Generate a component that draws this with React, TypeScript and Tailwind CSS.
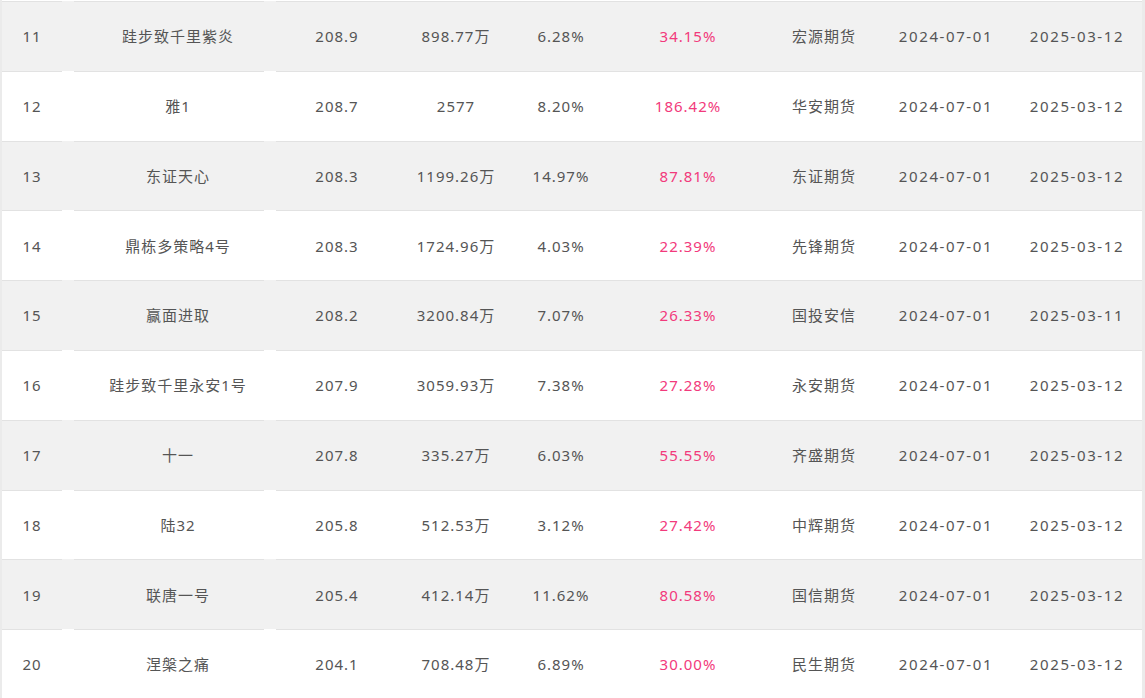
import React from 'react';

type Row = {
  rank: number;
  name: string;
  value: string;
  size: string;
  drawdown: string;
  ret: string;
  company: string;
  start: string;
  end: string;
};

const rows: Row[] = [
  { rank: 11, name: '跬步致千里紫炎', value: '208.9', size: '898.77万', drawdown: '6.28%', ret: '34.15%', company: '宏源期货', start: '2024-07-01', end: '2025-03-12' },
  { rank: 12, name: '雅1', value: '208.7', size: '2577', drawdown: '8.20%', ret: '186.42%', company: '华安期货', start: '2024-07-01', end: '2025-03-12' },
  { rank: 13, name: '东证天心', value: '208.3', size: '1199.26万', drawdown: '14.97%', ret: '87.81%', company: '东证期货', start: '2024-07-01', end: '2025-03-12' },
  { rank: 14, name: '鼎栋多策略4号', value: '208.3', size: '1724.96万', drawdown: '4.03%', ret: '22.39%', company: '先锋期货', start: '2024-07-01', end: '2025-03-12' },
  { rank: 15, name: '赢面进取', value: '208.2', size: '3200.84万', drawdown: '7.07%', ret: '26.33%', company: '国投安信', start: '2024-07-01', end: '2025-03-11' },
  { rank: 16, name: '跬步致千里永安1号', value: '207.9', size: '3059.93万', drawdown: '7.38%', ret: '27.28%', company: '永安期货', start: '2024-07-01', end: '2025-03-12' },
  { rank: 17, name: '十一', value: '207.8', size: '335.27万', drawdown: '6.03%', ret: '55.55%', company: '齐盛期货', start: '2024-07-01', end: '2025-03-12' },
  { rank: 18, name: '陆32', value: '205.8', size: '512.53万', drawdown: '3.12%', ret: '27.42%', company: '中辉期货', start: '2024-07-01', end: '2025-03-12' },
  { rank: 19, name: '联唐一号', value: '205.4', size: '412.14万', drawdown: '11.62%', ret: '80.58%', company: '国信期货', start: '2024-07-01', end: '2025-03-12' },
  { rank: 20, name: '涅槃之痛', value: '204.1', size: '708.48万', drawdown: '6.89%', ret: '30.00%', company: '民生期货', start: '2024-07-01', end: '2025-03-12' },
];

const cell = 'flex items-center justify-center border-t border-[#e2e2e2] whitespace-nowrap';

export default function App() {
  return (
    <div
      className="w-full h-[698px] overflow-hidden bg-white border-l-2 border-r-[3px] border-[#ebebeb] pt-px text-[15px] tracking-[1px] text-[#555]"
      style={{ fontFamily: '"Noto Sans", "Noto Sans CJK SC", sans-serif' }}
    >
      {rows.map((r, i) => (
        <div key={r.rank} className={`flex h-[69.8px] ${i % 2 === 0 ? 'bg-[#f1f1f1]' : 'bg-white'}`}>
          <div className={`${cell} w-[60px]`}>{r.rank}</div>
          <div className="w-[12px]" />
          <div className={`${cell} w-[190px] pl-[18px] border-[#dcdde5]`}>{r.name}</div>
          <div className="w-[12px]" />
          <div className={`${cell} w-[122px]`}>{r.value}</div>
          <div className={`${cell} w-[116px]`}>{r.size}</div>
          <div className={`${cell} w-[94px]`}>{r.drawdown}</div>
          <div className={`${cell} w-[160px] text-[#f23a7c]`}>{r.ret}</div>
          <div className={`${cell} w-[112px]`}>{r.company}</div>
          <div className={`${cell} w-[132px] tracking-[1.6px]`}>{r.start}</div>
          <div className={`${cell} w-[130px] tracking-[1.6px]`}>{r.end}</div>
        </div>
      ))}
    </div>
  );
}
